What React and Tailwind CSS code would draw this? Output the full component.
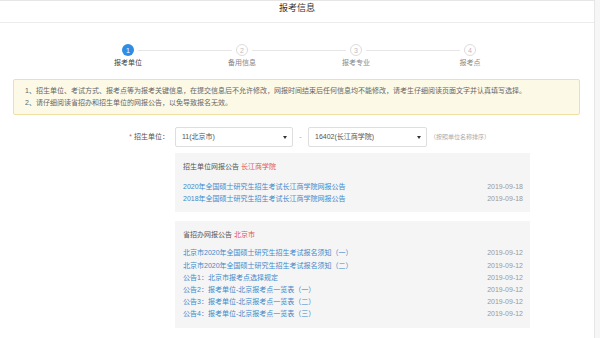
import React from "react";

const steps = ["报考单位", "备用信息", "报考专业", "报考点"];

const unitNotices = [
  { title: "2020年全国硕士研究生招生考试长江商学院网报公告", date: "2019-09-18" },
  { title: "2018年全国硕士研究生招生考试长江商学院网报公告", date: "2019-09-18" },
];

const cityNotices = [
  { title: "北京市2020年全国硕士研究生招生考试报名须知（一）", date: "2019-09-12" },
  { title: "北京市2020年全国硕士研究生招生考试报名须知（二）", date: "2019-09-12" },
  { title: "公告1：北京市报考点选择规定", date: "2019-09-12" },
  { title: "公告2：报考单位-北京报考点一览表（一）", date: "2019-09-12" },
  { title: "公告3：报考单位-北京报考点一览表（二）", date: "2019-09-12" },
  { title: "公告4：报考单位-北京报考点一览表（三）", date: "2019-09-12" },
];

const Step = ({ n, label, active }) => (
  <div className="w-[12px] flex flex-col items-center">
    <div
      className={`w-[12px] h-[12px] rounded-full flex items-center justify-center text-[7px] leading-none ${
        active
          ? "bg-[#2f8de4] text-white"
          : "bg-white border border-[#dcdcdc] text-[#bbb]"
      }`}
    >
      {n}
    </div>
    <div
      className={`mt-[2px] whitespace-nowrap text-[7px] leading-[10px] ${
        active ? "text-[#444]" : "text-[#888]"
      }`}
    >
      {label}
    </div>
  </div>
);

const Select = ({ value, width }) => (
  <div
    className={`${width} h-[20px] bg-white border border-[#dedede] rounded-[2px] flex items-center justify-between pl-[6px] pr-[5px] text-[7px] text-[#555]`}
  >
    <span>{value}</span>
    <svg width="4" height="3" viewBox="0 0 4 3">
      <path d="M0 0 L4 0 L2 3 Z" fill="#333" />
    </svg>
  </div>
);

const NoticePanel = ({ title, place, items, gap }) => (
  <div className="bg-[#f5f5f5] pl-[8px] pr-[7px] pt-[8px] pb-[7px]">
    <div className="text-[7px] leading-[12px] text-[#555]">
      {title} <span className="text-[#e25656]">{place}</span>
    </div>
    <div className={`${gap} flex flex-col`}>
      {items.map((it) => (
        <div
          key={it.title}
          className="flex justify-between items-center text-[7px] leading-[12.2px]"
        >
          <span className="text-[#3d8acb]">{it.title}</span>
          <span className="text-[#999]">{it.date}</span>
        </div>
      ))}
    </div>
  </div>
);

export default function App() {
  return (
    <div className="min-h-[338px] bg-[#f6f6f6] font-['Liberation_Sans','Noto_Sans_CJK_SC',sans-serif]">
      <div className="w-[595px] min-h-[338px] bg-white border-r border-[#e6e6e6] border-t">
        {/* header */}
        <div className="h-[22px] border-b border-[#ececec] text-center text-[9px] leading-[10px] pt-[2px] text-[#333]">
          报考信息
        </div>

        {/* stepper */}
        <div className="ml-[122px] w-[354px] mt-[21px] flex items-start">
          {steps.map((s, i) => (
            <React.Fragment key={s}>
              <Step n={i + 1} label={s} active={i === 0} />
              {i < steps.length - 1 && (
                <div className="flex-1 h-px bg-[#e6e6e6] mt-[6px] mx-[4px]" />
              )}
            </React.Fragment>
          ))}
        </div>

        {/* notice box */}
        <div className="mx-[13px] w-[567px] mt-[11px] bg-[#fdf9e7] border border-[#f1e0a6] rounded-[2px] px-[11px] py-[5px] text-[7px] leading-[12px] text-[#666]">
          <div>
            1、招生单位、考试方式、报考点等为报考关键信息，在提交信息后不允许修改，网报时间结束后任何信息均不能修改，请考生仔细阅读页面文字并认真填写选择。
          </div>
          <div>2、请仔细阅读省招办和招生单位的网报公告，以免导致报名无效。</div>
        </div>

        {/* form row */}
        <div className="mt-[12px] flex items-center">
          <div className="w-[175px] pr-[6px] text-right text-[7px] text-[#555]">
            <span className="text-[#e25656] mr-[2px]">*</span>
            招生单位：
          </div>
          <Select value="11(北京市)" width="w-[118px]" />
          <div className="w-[15px] text-center text-[7px] text-[#999]">-</div>
          <Select value="16402(长江商学院)" width="w-[119px]" />
          <div className="ml-[3px] text-[6px] text-[#aaa]">（按照单位名称排序）</div>
        </div>

        {/* notice panels */}
        <div className="ml-[175px] w-[355px] mt-[6px] flex flex-col gap-[9px]">
          <NoticePanel title="招生单位网报公告" place="长江商学院" items={unitNotices} gap="mt-[8px]" />
          <NoticePanel title="省招办网报公告" place="北京市" items={cityNotices} gap="mt-[6px]" />
        </div>
      </div>
    </div>
  );
}
